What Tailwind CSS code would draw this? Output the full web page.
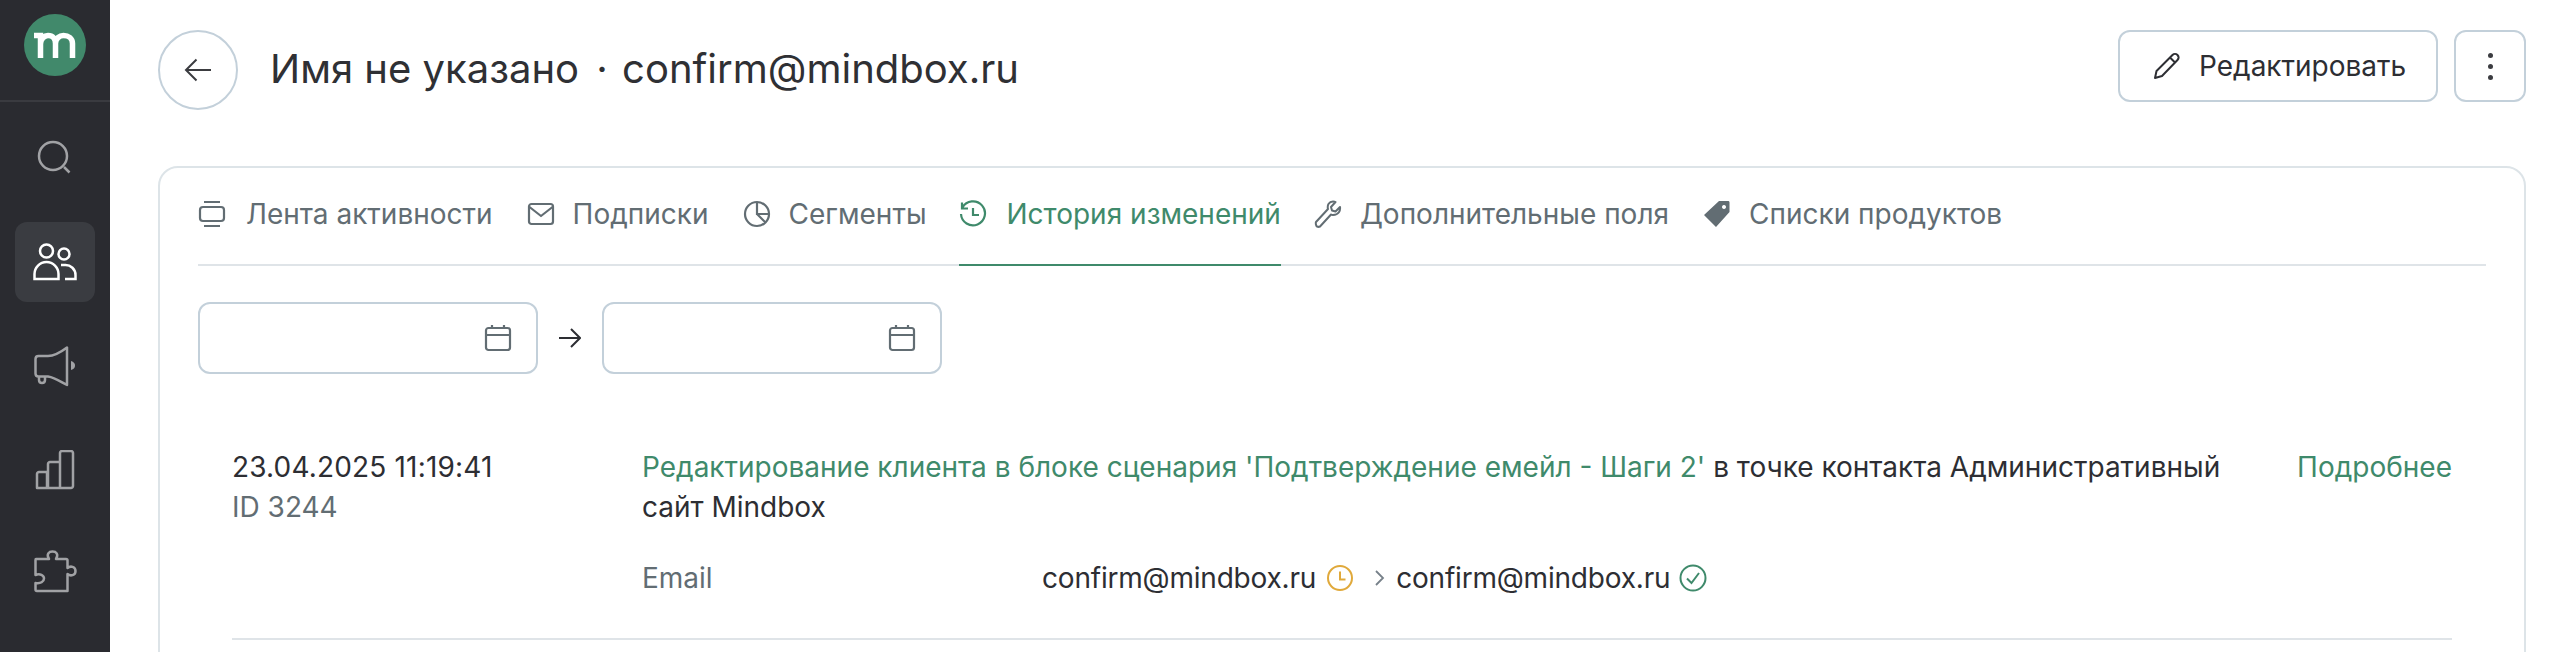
<!DOCTYPE html>
<html lang="ru"><head><meta charset="utf-8">
<script src="https://cdn.jsdelivr.net/npm/@tailwindcss/browser@4"></script>
</head>
<body class="bg-white overflow-hidden">
<div class="flex w-[2574px] h-[652px] overflow-hidden font-['Inter',sans-serif] text-[28px] leading-[40px] text-[#2d2e33]">
  <aside class="w-[110px] shrink-0 bg-[#2a2b30] flex flex-col items-center">
    <div class="h-[102px] w-full border-b-2 border-[#3a3b40] flex justify-center pt-[14px]">
      <div class="w-[62px] h-[62px] rounded-full bg-[#41896b] flex items-center justify-center">
        <svg width="42" height="26" viewBox="0 0 42 26" fill="none" stroke="#fff" stroke-width="5.500"><path d="M0 3.500h6.500V26M6.500 12c0-5 4-8.500 7.500-8.500 5 0 7.500 3.500 7.500 8V26M21.500 11.500c0-5 4-8 8-8 5 0 9 3 9 8V26"/></svg>
      </div>
    </div>
    <div class="mt-[34px] h-[44px] flex items-center justify-center">
      <svg width="36" height="36" viewBox="0 0 36 36" fill="none" stroke="#a1a2a5" stroke-width="2.500"><circle cx="16" cy="16" r="14"/><path d="M27 27l5.500 5.500"/></svg>
    </div>
    <div class="mt-[42px] w-[80px] h-[80px] rounded-[12px] bg-[#3a3c41] flex items-center justify-center">
      <svg width="44" height="38" viewBox="0 0 44 38" fill="none" stroke="#fff" stroke-width="2.500"><circle cx="13.500" cy="8" r="6.500"/><circle cx="31" cy="11" r="5.500"/><path d="M1.500 36v-5a12 12 0 0 1 24 0v5zM28 22h4a10 10 0 0 1 10.500 10v4H32"/></svg>
    </div>
    <div class="mt-[43px] h-[44px] flex items-center justify-center">
      <svg width="44" height="42" viewBox="0 0 44 42" fill="none" stroke="#a1a2a5" stroke-width="2.500" stroke-linejoin="round"><path d="M2.500 13c0-2 1-3 3-3H15c7 0 13-4 19-8.500v37.500C28 36 22 31.500 15 30.500H5.500c-2 0-3-1-3-3z"/><path d="M6 30v4c0 2 1.500 3 3 3s3-1 3-3v-4"/><path d="M38 15c3 1 4 2.500 4 4.500s-1 3.500-4 4.500z" fill="#a1a2a5" stroke="none"/></svg>
    </div>
    <div class="mt-[61px] h-[40px] flex items-center justify-center">
      <svg width="40" height="40" viewBox="0 0 40 40" fill="none" stroke="#a1a2a5" stroke-width="2.500" stroke-linejoin="round"><path d="M2 38V24c0-1 1-2 2-2h8V38zM13 38V14c0-1 1-2 2-2h10v26zM25 38V3c0-1 1-2 2-2h9c1 0 2 1 2 2v33c0 1-1 2-2 2z"/></svg>
    </div>
    <div class="mt-[60px] h-[44px] flex items-center justify-center">
      <svg width="44" height="44" viewBox="0 0 44 44" fill="none" stroke="#a1a2a5" stroke-width="2.500" stroke-linejoin="round"><path d="M3 9h13c-3-5 0-7.500 3.500-7.500S26 4 23 9h10c1 0 1.500.5 1.500 1.500V18c3-2.500 8-1.500 8 3s-5 5.500-8 3v17H4c-1 0-1.500-.5-1.500-1.500V33c5 1 8.500-1.500 8.500-4.500S7 23 2.500 25V10c0-.5 0-1 .5-1z"/></svg>
    </div>
  </aside>

  <main class="flex-1 min-w-0 pl-[48px] pr-[48px] pt-[30px]">
    <header class="flex items-start h-[80px]">
      <button class="w-[80px] h-[80px] rounded-full border-2 border-[#c3d0da] flex items-center justify-center shrink-0">
        <svg width="28" height="24" viewBox="0 0 28 24" fill="none" stroke="#3b3c40" stroke-width="2"><path d="M27 12H2M12.500 1.500L2 12l10.500 10.500"/></svg>
      </button>
      <h1 class="ml-[32px] mt-[14px] text-[40px] leading-[50px] font-normal text-[#2f3034] whitespace-nowrap">Имя не указано <span class="ml-[6px] mr-[3px]">·</span> confirm@mindbox.ru</h1>
      <div class="ml-auto flex gap-[16px]">
        <button class="w-[320px] h-[72px] rounded-[12px] border-2 border-[#c3d0da] flex items-center pl-[33px] gap-[18px]">
          <svg width="28" height="28" viewBox="0 0 28 28" fill="none" stroke="#2d2e33" stroke-width="2" stroke-linejoin="round"><path d="M2 26l1.500-7L19.500 3c1.500-1.500 3.500-1.500 5 0s1.500 3.500 0 5L9 24zM17 5.500l5.500 5.500"/></svg>
          <span>Редактировать</span>
        </button>
        <button class="w-[72px] h-[72px] rounded-[12px] border-2 border-[#c3d0da] flex flex-col items-center justify-center gap-[6px]">
          <span class="w-[5px] h-[5px] rounded-full bg-[#3b3c40]"></span><span class="w-[5px] h-[5px] rounded-full bg-[#3b3c40]"></span><span class="w-[5px] h-[5px] rounded-full bg-[#3b3c40]"></span>
        </button>
      </div>
    </header>

    <section class="mt-[56px] h-[600px] rounded-[20px] border-2 border-[#dde4e8] px-[38px]">
      <nav class="flex h-[98px] border-b-2 border-[#dfe4e8] text-[#626d73] whitespace-nowrap">
        <a class="flex items-center h-[92px] gap-[20px] pr-[34px]">
          <svg width="28" height="28" viewBox="0 0 28 28" fill="none" stroke="#626d73" stroke-width="2.200"><path d="M6 2h16M6 26h16"/><rect x="2" y="7" width="24" height="14" rx="3"/></svg><span>Лента активности</span></a>
        <a class="flex items-center h-[92px] gap-[18px] pr-[34px]">
          <svg width="28" height="28" viewBox="0 0 28 28" fill="none" stroke="#626d73" stroke-width="2.200" stroke-linejoin="round"><rect x="2" y="4" width="24" height="20" rx="2.500"/><path d="M2.500 7L14 16 25.500 7"/></svg><span>Подписки</span></a>
        <a class="flex items-center h-[92px] gap-[18px] pr-[32px]">
          <svg width="28" height="28" viewBox="0 0 28 28" fill="none" stroke="#626d73" stroke-width="2.200"><circle cx="14" cy="14" r="12"/><path d="M14 2v12h12M14 14l8.500 8.500"/></svg><span>Сегменты</span></a>
        <a class="flex items-start h-[98px] pt-[26px] gap-[20px] pr-0 text-[#3f8a6b] border-b-2 border-[#3f8a6b]">
          <svg class="mt-[6px]" width="28" height="28" viewBox="0 0 28 28" fill="none" stroke="#3f8a6b" stroke-width="2.200"><path d="M3.500 7.500A12 12 0 1 1 2 14M3 2.500v6h6M14 8v7h6"/></svg><span>История изменений</span></a>
        <a class="flex items-center h-[92px] gap-[18px] pl-[33px] pr-[34px]">
          <svg width="28" height="28" viewBox="0 0 28 28" fill="none" stroke="#626d73" stroke-width="2" stroke-linejoin="round"><path d="M2 22L14 9c-1-4 1-7.500 5-7.500 1 0 2 .2 2.500.5L17 7l1 3.500 3.500 1L26 7c.5 3.500-1 8-7 8-1 0-1.500 0-2-.5L6 26.500c-1 .5-2 .5-3 0s-1.500-3.500-1-4.500z"/></svg><span>Дополнительные поля</span></a>
        <a class="flex items-center h-[92px] gap-[18px]">
          <svg width="28" height="28" viewBox="0 0 28 28"><path fill-rule="evenodd" fill="#626d73" d="M16 1h9c1 0 1.500.5 1.500 1.500V12L13 27 1 15zM21 5a2 2 0 1 0 .01 0z"/></svg><span>Списки продуктов</span></a>
      </nav>

      <div class="mt-[36px] flex items-center">
        <div class="w-[340px] h-[72px] rounded-[12px] border-2 border-[#c3d0da] flex items-center justify-end pr-[24px]">
          <svg width="28" height="28" viewBox="0 0 28 28" fill="none" stroke="#626d73" stroke-width="2.200"><rect x="2" y="4" width="24" height="22" rx="2.500"/><path d="M2 11h24M8 1v4M20 1v4"/></svg>
        </div>
        <svg class="mx-[21px]" width="22" height="20" viewBox="0 0 22 20" fill="none" stroke="#2d2e33" stroke-width="2"><path d="M0 10h21M12 1l9 9-9 9"/></svg>
        <div class="w-[340px] h-[72px] rounded-[12px] border-2 border-[#c3d0da] flex items-center justify-end pr-[24px]">
          <svg width="28" height="28" viewBox="0 0 28 28" fill="none" stroke="#626d73" stroke-width="2.200"><rect x="2" y="4" width="24" height="22" rx="2.500"/><path d="M2 11h24M8 1v4M20 1v4"/></svg>
        </div>
      </div>

      <article class="mx-[34px] mt-[73px] pb-[40px] border-b-2 border-[#dfe4e8]">
        <div class="flex">
          <div class="w-[410px] shrink-0">
            <div class="tracking-[0.17px]">23.04.2025 11:19:41</div>
            <div class="text-[#626d73]">ID 3244</div>
          </div>
          <div class="w-[1640px] shrink-0"><span class="text-[#3f8a6b]">Редактирование клиента в блоке сценария 'Подтверждение емейл - Шаги 2'</span> в точке контакта Административный сайт Mindbox</div>
          <div class="ml-auto text-[#3f8a6b] whitespace-nowrap">Подробнее</div>
        </div>
        <div class="flex items-center mt-[31px] ml-[410px]">
          <div class="w-[400px] text-[#626d73]">Email</div>
          <div class="flex items-center whitespace-nowrap tracking-[-0.2px]">
            <span>confirm@mindbox.ru</span>
            <svg class="ml-[10px]" width="28" height="28" viewBox="0 0 28 28" fill="none" stroke="#e0a93b" stroke-width="2"><circle cx="14" cy="14" r="12"/><path d="M14 7.500v8h5.500"/></svg>
            <svg class="ml-[20px] mr-[10px]" width="12" height="18" viewBox="0 0 12 18" fill="none" stroke="#77818a" stroke-width="1.800"><path d="M2 2l7 7-7 7"/></svg>
            <span>confirm@mindbox.ru</span>
            <svg class="ml-[9px]" width="28" height="28" viewBox="0 0 28 28" fill="none" stroke="#3f8a6b" stroke-width="2"><circle cx="14" cy="14" r="12.500"/><path d="M8 14.500l4.500 4.500L20 9"/></svg>
          </div>
        </div>
      </article>
    </section>
  </main>
</div>
</body></html>
